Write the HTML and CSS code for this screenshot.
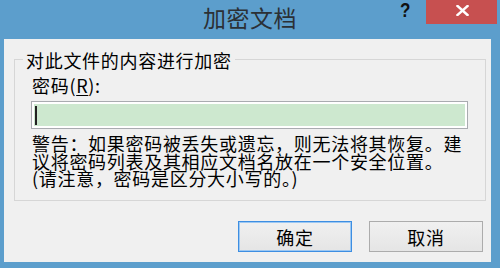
FILE: index.html
```html
<!DOCTYPE html>
<html lang="zh-CN">
<head>
<meta charset="utf-8">
<title>加密文档</title>
<link rel="stylesheet" href="styles.css">
</head>
<body>
<div class="window">
  <div class="titlebar">
    <div class="spacer"></div>
    <div class="title">加密文档</div>
    <div class="controls">
      <span class="help">?</span>
      <span class="close">
        <svg width="13" height="11" viewBox="0 0 13 11"><path d="M1.5 1 L11.5 10 M11.5 1 L1.5 10" stroke="#fff" stroke-width="2.4" stroke-linecap="square"/></svg>
      </span>
    </div>
  </div>
  <div class="client">
    <section class="group">
      <div class="legend">对此文件的内容进行加密</div>
      <div class="label">密码(<u>R</u>):</div>
      <div class="input"><span class="caret"></span></div>
      <p class="warning">警告：如果密码被丢失或遗忘，则无法将其恢复。建议将密码列表及其相应文档名放在一个安全位置。<br>(请注意，密码是区分大小写的。)</p>
    </section>
    <div class="buttons">
      <button class="btn btn-default">确定</button>
      <button class="btn">取消</button>
    </div>
  </div>
</div>
</body>
</html>
```
FILE: styles.css
```css
html, body {
  margin: 0;
  padding: 0;
}
body {
  width: 500px;
  height: 268px;
  overflow: hidden;
  background: #5c9ecc;
  font-family: "Noto Sans CJK SC", "Noto Sans", sans-serif;
  color: #000;
}
.window {
  width: 500px;
  height: 268px;
}
.titlebar {
  height: 39px;
  display: grid;
  grid-template-columns: 1fr auto 1fr;
  align-items: start;
}
.title {
  font-size: 23px;
  line-height: 23px;
  padding-top: 6px;
  letter-spacing: 0.5px;
  color: #2b3035;
}
.controls {
  display: flex;
  justify-content: flex-end;
  align-items: flex-start;
  padding-right: 3px;
}
.help {
  font-family: "Liberation Sans", Arial, sans-serif;
  font-weight: bold;
  font-size: 20px;
  line-height: 20px;
  margin-top: 0;
  margin-right: 15px;
  color: #111;
  display: inline-block;
  transform: scaleX(0.85);
}
.close {
  width: 71px;
  height: 24px;
  background: #c75050;
  display: flex;
  justify-content: center;
  align-items: center;
  padding-bottom: 3px;
  box-sizing: border-box;
}
.close svg {
  display: block;
  margin-left: 2px;
}
.client {
  margin-left: 4px;
  width: 487px;
  height: 223px;
  background: #f0f0f0;
  box-sizing: border-box;
  padding: 20px 8px 0 10px;
  font-size: 18px;
  letter-spacing: 0.7px;
}
.group {
  margin: 0;
  width: 472px;
  box-sizing: border-box;
  border: 1px solid #d6d6d6;
  padding: 0 17px 12px 16px;
}
.legend {
  width: fit-content;
  margin: -9px 0 0 -8px;
  padding: 0 3px;
  background: #f0f0f0;
  line-height: 18px;
}
.label {
  margin-top: 7px;
  line-height: 18px;
  margin-left: 1px;
}
.label u {
  text-underline-offset: 2px;
}
.input {
  margin-top: 7px;
  height: 28px;
  box-sizing: border-box;
  border: 1px solid #a9abb0;
  background: #cde8cf;
  box-shadow: inset 0 0 0 2px #ffffff;
  padding: 4px 0 0 3px;
}
.caret {
  display: block;
  width: 2px;
  height: 19px;
  background: #222;
}
.warning {
  margin: 6px 0 0 1px;
  line-height: 17.7px;
}
.buttons {
  display: flex;
  justify-content: flex-end;
  gap: 17px;
  margin-top: 20px;
}
.btn {
  width: 114px;
  height: 31px;
  box-sizing: border-box;
  border: 1px solid #acacac;
  background: linear-gradient(#f0f0f0, #e5e5e5);
  font-family: "Noto Sans CJK SC", sans-serif;
  font-size: 18px;
  letter-spacing: 0.7px;
  line-height: 18px;
  color: #000;
  padding: 0;
  margin: 0;
}
.btn-default {
  border-color: #3d8ee2;
  box-shadow: inset 0 0 0 1px #9dc8f2;
}
```
